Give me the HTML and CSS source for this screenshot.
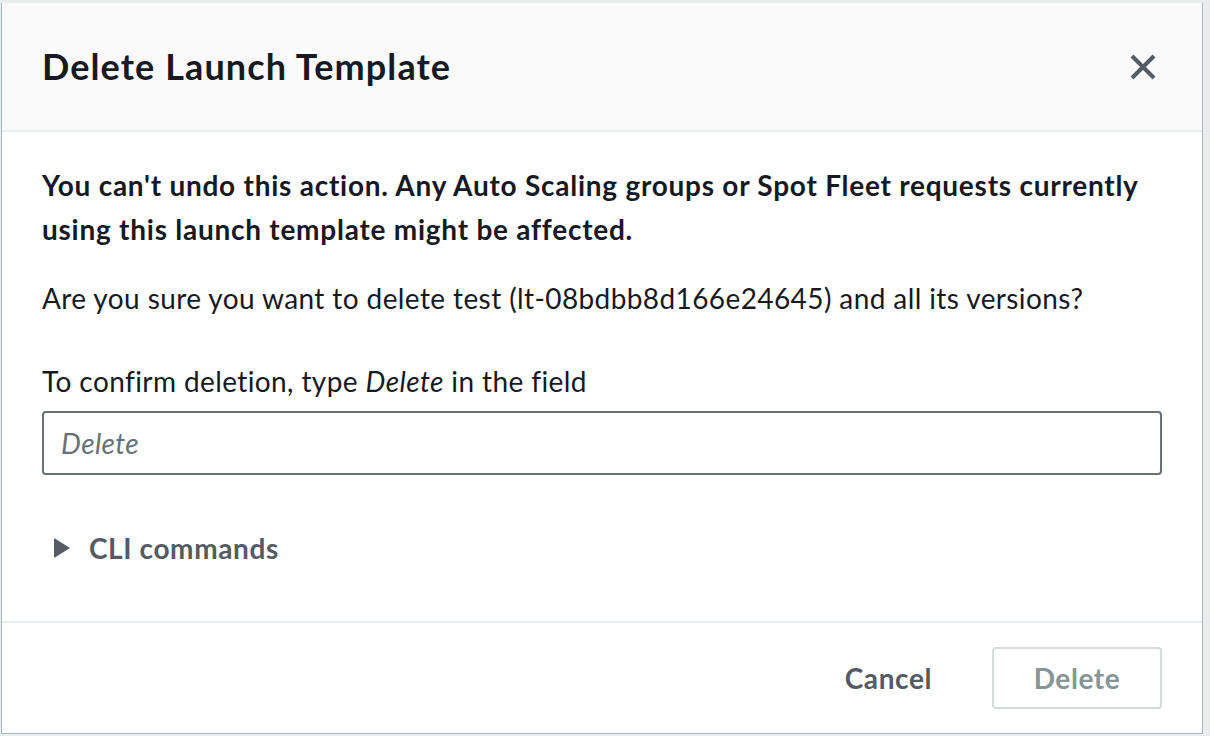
FILE: index.html
```html
<!DOCTYPE html>
<html lang="en">
<head>
<meta charset="UTF-8" />
<meta name="viewport" content="width=device-width, initial-scale=1" />
<title>Delete Launch Template</title>
<link rel="stylesheet" href="styles.css">
</head>
<body>

<div class="modal">
  <div class="modal-header">
    <h2>Delete Launch Template</h2>
    <button class="close-btn" aria-label="Close">
      <svg width="26" height="26" viewBox="0 0 26 26">
        <path d="M2 2 L24 24 M24 2 L2 24" stroke="#545b64" stroke-width="4" fill="none" />
      </svg>
    </button>
  </div>

  <div class="modal-body">
    <p class="warning">You can't undo this action. Any Auto Scaling groups or Spot Fleet requests currently using this launch template might be affected.</p>
    <p class="question">Are you sure you want to delete test (lt-08bdbb8d166e24645) and all its versions?</p>

    <label for="confirm" class="confirm-label">To confirm deletion, type <em>Delete</em> in the field</label>
    <input type="text" id="confirm" placeholder="Delete" />

    <div class="expander">
      <span class="caret"></span>
      <span>CLI commands</span>
    </div>
  </div>

  <div class="modal-footer">
    <button class="btn-link">Cancel</button>
    <button class="btn-delete" disabled>Delete</button>
  </div>
</div>

</body>
</html>
```

FILE: styles.css
```css
body {
  margin: 0;
  padding: 3px 0 0 1px;
  background: #eaeded;
  font-family: Lato, 'Noto Sans', sans-serif;
  color: #16191f;
  overflow: hidden;
}
.modal {
  width: 1200px;
  background: #fff;
  border-left: 1px solid #aab7b8;
  border-right: 1px solid #aab7b8;
  border-bottom: 1px solid #aab7b8;
}

.modal-header {
  height: 129px;
  background: #fafafa;
  border-bottom: 2px solid #eaeded;
  padding: 0 40px;
  display: flex;
  align-items: center;
  justify-content: space-between;
  box-sizing: border-box;
}
.modal-header h2 {
  margin: 0 0 2px;
  font-size: 36px;
  font-weight: 700;
  letter-spacing: 1.1px;
  color: #16191f;
}
.close-btn {
  background: none;
  border: none;
  padding: 0;
  margin-right: 6px;
  display: flex;
  cursor: pointer;
}

.modal-body {
  padding: 31px 40px 51px;
  font-size: 28px;
  line-height: 44px;
  letter-spacing: 0.4px;
}
.modal-body p {
  margin: 0;
}
.warning {
  font-weight: 700;
  letter-spacing: 0.75px;
}
.question {
  margin-top: 25px !important;
}
.confirm-label {
  display: block;
  margin-top: 39px;
}
#confirm {
  display: block;
  width: 100%;
  box-sizing: border-box;
  height: 64px;
  margin-top: 8px;
  padding: 0 17px;
  border: 2px solid #687078;
  border-radius: 4px;
  font-family: inherit;
  font-size: 28px;
  letter-spacing: 0.4px;
  color: #16191f;
}
#confirm::placeholder {
  color: #687078;
  font-style: italic;
}

.expander {
  display: flex;
  align-items: center;
  gap: 19px;
  margin-top: 51px;
  padding-left: 12px;
  font-weight: 700;
  letter-spacing: 0.6px;
  color: #545b64;
}
.caret {
  width: 0;
  height: 0;
  border-top: 10px solid transparent;
  border-bottom: 10px solid transparent;
  border-left: 16px solid #545b64;
}

.modal-footer {
  border-top: 2px solid #eaeded;
  padding: 24px 40px 24px;
  display: flex;
  justify-content: flex-end;
  gap: 20px;
}
.modal-footer button {
  height: 62px;
  padding: 0 38px;
  border-radius: 4px;
  font-family: inherit;
  font-size: 28px;
  font-weight: 700;
  letter-spacing: 0.6px;
  background: #fff;
}
.btn-link {
  border: 2px solid transparent;
  color: #545b64;
  cursor: pointer;
}
.btn-delete {
  border: 2px solid #d5dbdb;
  color: #879596;
  min-width: 170px;
}
```
